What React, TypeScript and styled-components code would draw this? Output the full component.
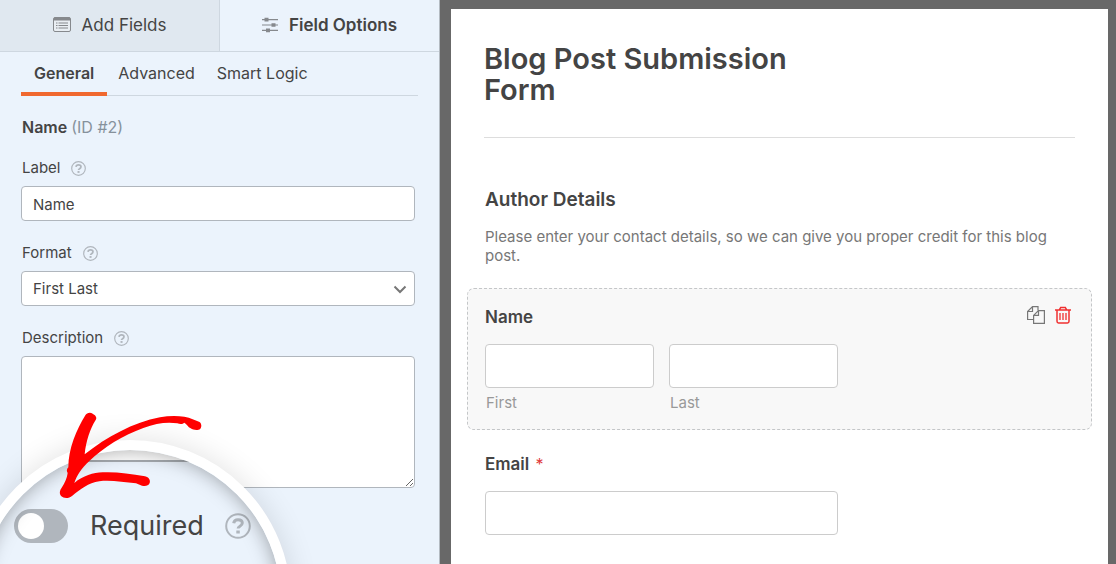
import React from "react";
import styled, { createGlobalStyle } from "styled-components";

const Global = createGlobalStyle`
  *, *::before, *::after { box-sizing: border-box; }
  body { margin: 0; background: #686868; color: #444; font-family: Inter, "Liberation Sans", sans-serif; font-size: 15px; line-height: 20px; }
  button, input, select, textarea { font: inherit; color: inherit; }
  h1, h2, p { margin: 0; }
`;

const Builder = styled.div`
  display: flex;
  height: 100vh;
  overflow: hidden;
`;

const Sidebar = styled.aside`
  position: relative;
  flex: 0 0 440px;
  overflow: hidden;
  background: #ebf3fc;
  border-right: 1px solid #b4bbc2;
`;

const PanelTabs = styled.nav`
  display: flex;
  height: 52px;
  border-bottom: 1px solid #ced7e0;
`;

const PanelTab = styled.button<{ $active?: boolean }>`
  flex: 1;
  display: flex;
  align-items: center;
  justify-content: center;
  gap: 11px;
  padding: 0 0 2px;
  border: 0;
  border-right: ${(p) => (p.$active ? "0" : "1px solid #ced7e0")};
  background: ${(p) => (p.$active ? "transparent" : "#e0e8f0")};
  font-size: 17px;
  font-weight: ${(p) => (p.$active ? 600 : 400)};
`;

const Options = styled.div`
  padding: 0 21px;
`;

const SubTabs = styled.nav`
  display: flex;
  height: 44px;
  border-bottom: 1px solid #ced7e0;
`;

const SubTab = styled.button<{ $active?: boolean }>`
  height: 44px;
  padding: 2px ${(p) => (p.$active ? 13 : 11)}px 0;
  border: 0;
  border-bottom: 4px solid ${(p) => (p.$active ? "#f0682f" : "transparent")};
  background: none;
  font-size: 16px;
  font-weight: ${(p) => (p.$active ? 600 : 400)};
`;

const FieldTitle = styled.p`
  padding: 21px 1px;
  font-size: 16px;
  font-weight: 600;
`;

const FieldId = styled.span`
  color: #86919b;
  font-weight: 400;
`;

const Option = styled.div`
  margin: 0 3px 22px 0;
`;

const OptionLabel = styled.label`
  display: flex;
  align-items: center;
  gap: 11px;
  padding-left: 1px;
  margin-bottom: 8px;
`;

const box = `
  display: block;
  width: 100%;
  border: 1px solid #b0b6bd;
  border-radius: 4px;
  background: #fff;
`;

const TextInput = styled.input`
  ${box}
  height: 35px;
  padding: 2px 11px 0;
`;

const SelectWrap = styled.div`
  position: relative;
`;

const Select = styled.select`
  ${box}
  height: 35px;
  padding: 0 11px;
  appearance: none;
`;

const Chevron = styled.svg`
  position: absolute;
  right: 8px;
  top: 14px;
  pointer-events: none;
`;

const TextArea = styled.textarea`
  ${box}
  height: 132px;
  resize: vertical;
`;

const Lens = styled.div`
  position: absolute;
  left: -31px;
  top: 440px;
  width: 322px;
  height: 322px;
  border: 10px solid #fff;
  border-radius: 50%;
  overflow: hidden;
  background: #ebf3fc;
  box-shadow: 0 0 30px rgba(0, 0, 0, 0.12);
  &::after {
    content: "";
    position: absolute;
    inset: 0;
    border-radius: 50%;
    box-shadow: inset 0 0 20px rgba(0, 0, 0, 0.35);
    pointer-events: none;
  }
`;

const LensBox = styled.div`
  height: 12px;
  border-bottom: 2px solid #a6abb0;
  background: #fff;
`;

const ToggleRow = styled.div`
  display: flex;
  align-items: center;
  padding: 47px 0 0 35px;
`;

const Toggle = styled.input`
  appearance: none;
  display: flex;
  align-items: center;
  width: 54px;
  height: 34px;
  margin: 0;
  padding: 0 4px;
  border-radius: 17px;
  background: #b0b6bd;
  &::before {
    content: "";
    width: 26px;
    height: 26px;
    border-radius: 50%;
    background: #fff;
  }
`;

const ToggleLabel = styled.label`
  margin: 0 21px 0 22px;
  font-size: 27px;
  line-height: 34px;
`;

const Arrow = styled.svg`
  position: absolute;
  left: 50px;
  top: 405px;
  pointer-events: none;
`;

const Preview = styled.main`
  flex: 1;
  min-width: 0;
  margin: 9px 8px 0 11px;
  padding: 34px 16px 0;
  background: #fff;
`;

const FormTitle = styled.h1`
  max-width: 360px;
  margin: 0 17px;
  font-size: 29px;
  font-weight: 600;
  line-height: 31px;
`;

const Divider = styled.hr`
  margin: 32px 17px 0;
  border: 0;
  border-top: 1px solid #ddd;
`;

const Section = styled.section`
  padding: 50px 18px 23px;
`;

const SectionTitle = styled.h2`
  font-size: 19px;
  font-weight: 600;
  line-height: 24px;
`;

const SectionText = styled.p`
  margin-top: 15px;
  color: #777;
  line-height: 19px;
`;

const FormField = styled.fieldset<{ $selected?: boolean }>`
  position: relative;
  min-width: 0;
  margin: 0 0 5px;
  padding: 18px 17px 16px;
  border: 1px dashed ${(p) => (p.$selected ? "#c4c6c8" : "transparent")};
  border-radius: 7px;
  background: ${(p) => (p.$selected ? "#f8f8f8" : "none")};
`;

const FieldLabel = styled.label`
  display: block;
  margin-bottom: 17px;
  font-size: 17px;
  font-weight: 600;
`;

const Star = styled.span`
  margin-left: 2px;
  color: #e0393a;
  font-size: 16px;
  font-weight: 400;
`;

const Columns = styled.div`
  display: flex;
  gap: 15px;
`;

const Column = styled.div`
  flex: 0 0 169px;
`;

const FormInput = styled.input`
  display: block;
  width: 100%;
  max-width: 353px;
  height: 44px;
  border: 1px solid #ccc;
  border-radius: 4px;
  background: #fff;
`;

const SubLabel = styled.label`
  display: block;
  padding: 5px 1px 0;
  color: #999;
`;

const Actions = styled.div`
  position: absolute;
  top: 17px;
  right: 20px;
  display: flex;
  gap: 10px;
`;

const IconButton = styled.button`
  display: block;
  padding: 0;
  border: 0;
  background: none;
  svg { display: block; }
`;

const Help = ({ size = 15 }: { size?: number }) => (
  <svg width={size} height={size} viewBox="0 0 26 26" fill="none" stroke="#b0b6bd">
    <circle cx="13" cy="13" r="11.8" strokeWidth="2" />
    <path d="M8.7 10.2C9 7.8 10.7 6.7 13 6.7c2.500 0 4.300 1.300 4.300 3.400 0 3.200-4.200 3-4.200 5.400" strokeWidth="3" />
    <path d="M11.300 19h3.500" strokeWidth="3.200" />
  </svg>
);

export default function App() {
  return (
    <>
      <Global />
      <Builder>
        <Sidebar>
          <PanelTabs>
            <PanelTab>
              <svg width="18" height="15" viewBox="0 0 18 15" fill="none">
                <rect x="0.5" y="0.5" width="17" height="14" rx="1.500" fill="#e9eef3" stroke="#86898d" />
                <path d="M1 2h16" stroke="#86898d" strokeWidth="3" />
                <path d="M3 6h1.500M3 8.500h1.500M3 11h1.500M5.500 6h9.500M5.500 8.500h9.500M5.500 11h9.500" stroke="#86898d" />
              </svg>
              Add Fields
            </PanelTab>
            <PanelTab $active>
              <svg width="16" height="16" viewBox="0 0 16 16" fill="#86898d">
                <path d="M0 2h16v1.200H0zM0 7.400h16v1.200H0zM0 12.800h16V14H0z" />
                <path d="M2.500 .8h4v3.600h-4zM9.500 6.200h4v3.600h-4zM4 11.600h4v3.600H4z" />
              </svg>
              Field Options
            </PanelTab>
          </PanelTabs>
          <Options>
            <SubTabs>
              <SubTab $active>General</SubTab>
              <SubTab>Advanced</SubTab>
              <SubTab>Smart Logic</SubTab>
            </SubTabs>
            <FieldTitle>Name <FieldId>(ID #2)</FieldId></FieldTitle>
            <Option>
              <OptionLabel htmlFor="label">Label <Help /></OptionLabel>
              <TextInput id="label" defaultValue="Name" />
            </Option>
            <Option>
              <OptionLabel htmlFor="format">Format <Help /></OptionLabel>
              <SelectWrap>
                <Select id="format"><option>First Last</option></Select>
                <Chevron width="14" height="9" viewBox="0 0 14 9" fill="none" stroke="#777" strokeWidth="2"><path d="M1.500 1.500 7 7l5.500-5.500" /></Chevron>
              </SelectWrap>
            </Option>
            <Option>
              <OptionLabel htmlFor="description">Description <Help /></OptionLabel>
              <TextArea id="description" />
            </Option>
          </Options>
          <Lens>
            <LensBox />
            <ToggleRow>
              <Toggle type="checkbox" id="required" />
              <ToggleLabel htmlFor="required">Required</ToggleLabel>
              <Help size={26} />
            </ToggleRow>
          </Lens>
          <Arrow width="160" height="100" viewBox="0 0 480 300" fill="#f00">
            <path d="M106 31C110 23 121 21 128 26C137 31 142 38 137 45C121 70 108 108 104 148C170 96 250 52 330 37C365 31 405 32 428 43L447 50C455 53 456 66 451 71C443 78 430 75 422 70C414 66 410 57 403 53C398 58 389 57 382 55C350 50 318 55 280 69C220 90 160 128 118 168C94 191 80 211 73 234C99 212 130 203 158 202C198 200 240 206 285 214C297 217 302 226 299 234C295 243 286 244 276 242L258 235C220 232 180 224 148 229C115 234 91 253 67 272C56 281 42 281 33 273C27 265 29 256 35 248C45 233 51 219 53 204C49 199 50 192 55 187C55 131 80 74 106 31Z" />
          </Arrow>
        </Sidebar>
        <Preview>
          <FormTitle>Blog Post Submission Form</FormTitle>
          <Divider />
          <Section>
            <SectionTitle>Author Details</SectionTitle>
            <SectionText>Please enter your contact details, so we can give you proper credit for this blog post.</SectionText>
          </Section>
          <FormField $selected>
            <FieldLabel as="div">Name</FieldLabel>
            <Columns>
              <Column><FormInput id="first" /><SubLabel htmlFor="first">First</SubLabel></Column>
              <Column><FormInput id="last" /><SubLabel htmlFor="last">Last</SubLabel></Column>
            </Columns>
            <Actions>
              <IconButton aria-label="Duplicate field">
                <svg width="18" height="18" viewBox="0 0 18 18" fill="none" stroke="#777" strokeWidth="1.200">
                  <path d="M6.500 13.500H.6V5.500L5.500.6h5.500v4M5.500.6v4.900H.6" />
                  <path d="M6.600 9.400 11.500 4.600h5.900v12.800H6.600zM11.500 4.600v4.800H6.600" />
                </svg>
              </IconButton>
              <IconButton aria-label="Delete field">
                <svg width="16" height="18" viewBox="0 0 16 18" fill="none" stroke="#f03030" strokeWidth="1.500">
                  <path d="M0 4h16M4.500 3.700 5.700 1.400h4.600l1.200 2.300M2 4v11.300c0 1 .5 1.700 1.500 1.700h9c1 0 1.500-.7 1.500-1.700V4" />
                  <path d="M5 7v7M8 7v7M11 7v7" strokeWidth="1.300" />
                </svg>
              </IconButton>
            </Actions>
          </FormField>
          <FormField>
            <FieldLabel htmlFor="email">Email <Star>*</Star></FieldLabel>
            <FormInput id="email" type="email" />
          </FormField>
        </Preview>
      </Builder>
    </>
  );
}
